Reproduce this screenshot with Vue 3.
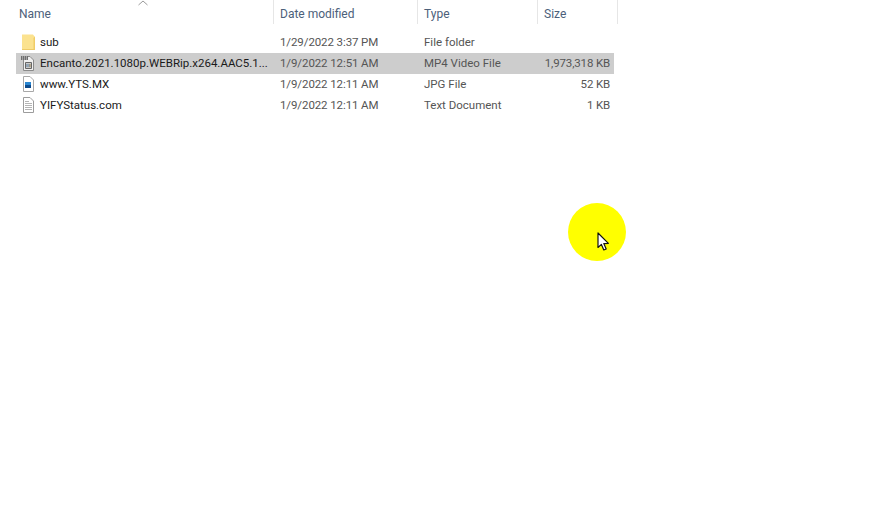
<script setup>
const files = [
  { name: 'sub', date: '1/29/2022 3:37 PM', type: 'File folder', size: '', icon: 'folder' },
  { name: 'Encanto.2021.1080p.WEBRip.x264.AAC5.1...', date: '1/9/2022 12:51 AM', type: 'MP4 Video File', size: '1,973,318 KB', icon: 'video', selected: true },
  { name: 'www.YTS.MX', date: '1/9/2022 12:11 AM', type: 'JPG File', size: '52 KB', icon: 'image' },
  { name: 'YIFYStatus.com', date: '1/9/2022 12:11 AM', type: 'Text Document', size: '1 KB', icon: 'text' },
]
</script>

<template>
  <div class="explorer">
    <svg class="sort-arrow" width="10" height="6" viewBox="0 0 10 6">
      <path d="M0.5 5 L5 1 L9.5 5" fill="none" stroke="#9a9a9a" stroke-width="1" />
    </svg>

    <div class="header">
      <div class="head-cell name-head">Name</div>
      <div class="head-cell">Date modified</div>
      <div class="head-cell">Type</div>
      <div class="head-cell">Size</div>
    </div>

    <div class="list">
      <div v-for="file in files" :key="file.name" class="row" :class="{ selected: file.selected }">
        <div class="name-cell">
          <svg class="icon" width="16" height="16" viewBox="0 0 16 16">
            <template v-if="file.icon === 'folder'">
              <path d="M3 0.5 H14 L16 3 V16 H3 Z" fill="#fbe28f" />
              <path d="M14.5 4 L16 2.5 V16 H14.5 Z" fill="#f0cc66" />
              <path d="M3 15.5 H16" stroke="#eecb68" />
            </template>
            <template v-else-if="file.icon === 'video'">
              <path d="M4.5 1.5 H11 L14.5 5 V15.5 H4.5 Z" fill="#efefef" stroke="#8a8a8a" />
              <path d="M2 1 H9 V5 H2 Z" fill="#6f6f6f" />
              <path d="M3 2 H4 M5 2 H6 M7 2 H8 M3 4 H4 M5 4 H6 M7 4 H8" stroke="#dcdcdc" />
              <path d="M6.5 7.5 H12.5 V13.5 H6.5 Z" fill="#c9c9c9" stroke="#666" />
              <path d="M8 9 V12 M10 9 V12" stroke="#5d7f9e" />
              <path d="M11 9 V12" stroke="#a48a58" />
            </template>
            <template v-else-if="file.icon === 'image'">
              <path d="M4.5 0.5 H11 L14.5 4 V15.5 H4.5 Z" fill="#fff" stroke="#a8a8a8" />
              <path d="M6 6 H12 V12 H6 Z" fill="#2a86d0" />
              <path d="M6 9 H12 V12 H6 Z" fill="#0d4a8c" />
            </template>
            <template v-else>
              <path d="M4.5 0.5 H11 L14.5 4 V15.5 H4.5 Z" fill="#fff" stroke="#9c9c9c" />
              <path d="M6 4.5 H10 M6 6.5 H13 M6 8.5 H13 M6 10.5 H13 M6 12.5 H13" stroke="#b4b4b4" />
            </template>
          </svg>
          <span class="name">{{ file.name }}</span>
        </div>
        <div class="cell date">{{ file.date }}</div>
        <div class="cell">{{ file.type }}</div>
        <div class="cell size">{{ file.size }}</div>
      </div>
    </div>

    <div class="highlight">
      <svg class="cursor" width="13" height="20" viewBox="0 0 13 20">
        <path d="M1 1 V15.5 L4.4 12.4 L6.8 18 L9.2 17 L6.8 11.6 L11.4 11.4 Z" fill="#fff" stroke="#111" stroke-width="1.2" stroke-linejoin="round" />
      </svg>
    </div>
  </div>
</template>

<style>
html,
body {
  margin: 0;
  background: #fff;
}
</style>

<style scoped>
.explorer {
  position: relative;
  width: 896px;
  height: 532px;
  overflow: hidden;
  background: #fff;
  font-family: Roboto, "Noto Sans", sans-serif;
  font-size: 11.5px;
  color: #3c3c3c;
}

.sort-arrow {
  position: absolute;
  left: 138px;
  top: 0;
}

.header {
  display: grid;
  grid-template-columns: 258px 144px 120px 80px;
  margin-left: 16px;
  height: 24px;
  margin-bottom: 8px;
  font-size: 12px;
}

.head-cell {
  display: flex;
  align-items: center;
  height: 24px;
  padding: 3px 0 0 6px;
  box-sizing: border-box;
  border-right: 1px solid #e6e6e6;
  color: #4c607a;
}

.name-head {
  padding-left: 3px;
}

.list {
  display: flex;
  flex-direction: column;
  width: 598px;
  margin-left: 16px;
}

.row {
  display: grid;
  grid-template-columns: 257px 144px 120px 77px;
  align-items: center;
  height: 21px;
  padding-bottom: 1px;
  box-sizing: border-box;
}

.row.selected {
  background: #cdcdcd;
}

.name-cell {
  display: flex;
  align-items: center;
  gap: 5px;
  padding-left: 3px;
  min-width: 0;
}

.icon {
  flex: none;
}

.name {
  color: #1a1a1a;
  white-space: nowrap;
}

.cell {
  padding-left: 7px;
  color: #555;
  white-space: nowrap;
}

.date {
  letter-spacing: -0.1px;
}

.size {
  padding: 0 4px 0 0;
  letter-spacing: -0.15px;
  text-align: right;
}

.highlight {
  position: absolute;
  left: 568px;
  top: 203px;
  width: 58px;
  height: 58px;
  border-radius: 50%;
  background: #ffff00;
}

.cursor {
  position: absolute;
  left: 29px;
  top: 29px;
}
</style>
